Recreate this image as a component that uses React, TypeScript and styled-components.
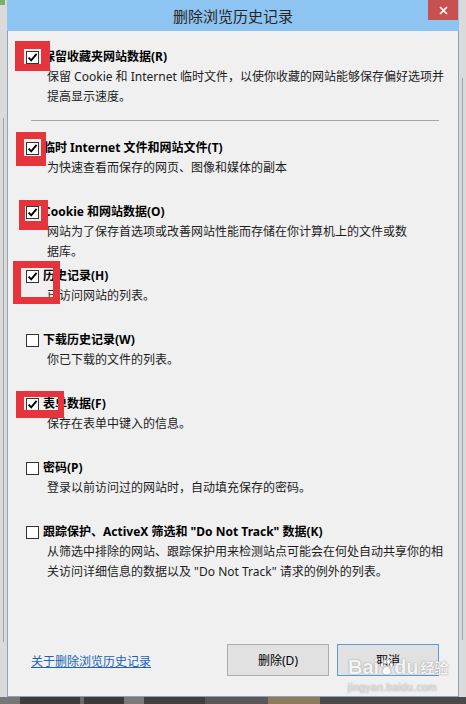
import React from "react";
import styled, { createGlobalStyle } from "styled-components";

const GlobalStyle = createGlobalStyle`
  *, *::before, *::after { box-sizing: border-box; }
  html, body { margin: 0; padding: 0; }
  body {
    width: 466px;
    height: 704px;
    overflow: hidden;
    font-family: "Noto Sans", "Noto Sans CJK SC", sans-serif;
  }
`;

const Backdrop = styled.div`
  position: relative;
  width: 466px;
  height: 704px;
  display: grid;
  grid-template-columns: 7px 452px 7px;
  grid-template-rows: 697px 7px;
  background:
    linear-gradient(#a3a3a3, #a3a3a3) 3px 118px / 1px 524px no-repeat,
    linear-gradient(#a3a3a3, #a3a3a3) 462px 78px / 1px 562px no-repeat,
    linear-gradient(#7fae6a, #7fae6a) 0 0 / 5px 5px no-repeat,
    linear-gradient(
        to right,
        #777 0 20px,
        #3c3c3c 20px 80px,
        #6a6a6a 80px 84px,
        #3a3a3a 84px 124px,
        #7a7a7a 124px 144px,
        #404040 144px 205px,
        #585858 205px 268px,
        #8c7c5c 268px 320px,
        #4a4a4a 320px 466px
      )
      0 697px / 466px 7px no-repeat,
    #dadada;
`;

const Dialog = styled.section`
  grid-column: 2;
  grid-row: 1;
  display: flex;
  flex-direction: column;
  background: #f0f0f0;
  border: 1px solid #8ea3b8;
  border-top: none;
`;

const TitleBar = styled.header`
  height: 31px;
  margin: 0 -1px;
  background: #8ec4f1;
  display: grid;
  grid-template-columns: 1fr auto 1fr;
`;

const Title = styled.h1`
  grid-column: 2;
  margin: 0;
  font-family: "Noto Sans CJK SC", sans-serif;
  font-weight: 400;
  font-size: 15px;
  line-height: 31px;
  color: #262626;
`;

const CloseButton = styled.div`
  grid-column: 3;
  justify-self: end;
  align-self: start;
  width: 30px;
  height: 20px;
  margin-right: 1px;
  background: #c75050;
  display: flex;
  align-items: center;
  justify-content: center;
`;

const Body = styled.div`
  flex: 1;
  display: flex;
  flex-direction: column;
  padding: 16px 19px 20px 18px;
`;

const Option = styled.div`
  display: grid;
  grid-template-columns: 13px 1fr;
  column-gap: 4px;
  align-content: start;
`;

const OptionList = styled.div`
  display: grid;
  grid-auto-rows: 64px;
`;

const Box = styled.span`
  width: 13px;
  height: 13px;
  align-self: center;
  background: #fff;
  border: 1px solid #333;
  display: flex;
  align-items: center;
  justify-content: center;
`;

const Heading = styled.div`
  font-size: 12px;
  font-weight: 700;
  line-height: 20px;
  color: #000;
  white-space: nowrap;
`;

const Desc = styled.div`
  grid-column: 2;
  padding-left: 4px;
  font-size: 12px;
  line-height: 20px;
  color: #1c1c1c;
  white-space: nowrap;
`;

const Line = styled.span`
  display: block;
`;

const Separator = styled.hr`
  margin: 13px 0 17px 5px;
  border: none;
  height: 1px;
  background: #a4a4a4;
`;

const Footer = styled.footer`
  margin-top: auto;
  display: flex;
  align-items: center;
  gap: 8px;
  padding-left: 5px;
`;

const HelpLink = styled.a`
  margin-right: auto;
  font-family: "Noto Sans CJK SC", sans-serif;
  font-size: 12px;
  color: #1a63b8;
  text-decoration: underline;
  cursor: pointer;
`;

const Button = styled.button<{ $primary?: boolean }>`
  width: 102px;
  height: 32px;
  padding: 0;
  background: #e1e1e1;
  border: 1px solid ${(p) => (p.$primary ? "#5b9bd5" : "#adadad")};
  font-family: "Noto Sans", "Noto Sans CJK SC", sans-serif;
  font-size: 12px;
  color: #000;
`;

const Highlight = styled.div<{
  $x: number;
  $y: number;
  $w: number;
  $h: number;
  $t: number;
  $r: number;
  $b: number;
  $l: number;
}>`
  position: absolute;
  left: ${(p) => p.$x}px;
  top: ${(p) => p.$y}px;
  width: ${(p) => p.$w}px;
  height: ${(p) => p.$h}px;
  border-style: solid;
  border-color: #e6343c;
  border-width: ${(p) => `${p.$t}px ${p.$r}px ${p.$b}px ${p.$l}px`};
  pointer-events: none;
`;

const Watermark = styled.div`
  position: absolute;
  left: 348px;
  top: 656px;
  display: flex;
  flex-direction: column;
  align-items: flex-start;
  pointer-events: none;
  color: rgba(255, 255, 255, 0.92);
  text-shadow: 0 0 1px rgba(90, 90, 90, 0.55), 0 0 2px rgba(120, 120, 120, 0.35);
`;

const MarkRow = styled.div`
  display: flex;
  align-items: center;
  font-family: "Liberation Sans", sans-serif;
  font-weight: 700;
  font-size: 20px;
  line-height: 22px;
`;

const MarkCjk = styled.span`
  font-family: "Noto Sans CJK SC", sans-serif;
  font-size: 14px;
  font-weight: 700;
  margin-left: 2px;
`;

const MarkSite = styled.div`
  font-family: "Liberation Sans", sans-serif;
  font-size: 10px;
  line-height: 12px;
  margin-top: 4px;
  letter-spacing: 0.5px;
  color: rgba(255, 255, 255, 0.7);
`;

const Check = () => (
  <svg width="11" height="11" viewBox="0 0 11 11">
    <path d="M1.6 5.6 L4.2 8.3 L9.6 1.9" fill="none" stroke="#000" strokeWidth="1.9" />
  </svg>
);

type Item = { title: string; lines: string[]; checked: boolean };

const items: Item[] = [
  { title: "临时 Internet 文件和网站文件(T)", lines: ["为快速查看而保存的网页、图像和媒体的副本"], checked: true },
  {
    title: "Cookie 和网站数据(O)",
    lines: ["网站为了保存首选项或改善网站性能而存储在你计算机上的文件或数", "据库。"],
    checked: true,
  },
  { title: "历史记录(H)", lines: ["已访问网站的列表。"], checked: true },
  { title: "下载历史记录(W)", lines: ["你已下载的文件的列表。"], checked: false },
  { title: "表单数据(F)", lines: ["保存在表单中键入的信息。"], checked: true },
  { title: "密码(P)", lines: ["登录以前访问过的网站时，自动填充保存的密码。"], checked: false },
  {
    title: "跟踪保护、ActiveX 筛选和 \"Do Not Track\" 数据(K)",
    lines: [
      "从筛选中排除的网站、跟踪保护用来检测站点可能会在何处自动共享你的相",
      "关访问详细信息的数据以及 \"Do Not Track\" 请求的例外的列表。",
    ],
    checked: false,
  },
];

const OptionView = ({ item }: { item: Item }) => (
  <Option>
    <Box>{item.checked && <Check />}</Box>
    <Heading>{item.title}</Heading>
    <Desc>
      {item.lines.map((l) => (
        <Line key={l}>{l}</Line>
      ))}
    </Desc>
  </Option>
);

const Paw = () => (
  <svg width="15" height="17" viewBox="0 0 15 17">
    <g fill="rgba(255,255,255,0.92)" stroke="rgba(110,110,110,0.5)" strokeWidth="0.7">
      <ellipse cx="3" cy="6" rx="1.7" ry="2.2" />
      <ellipse cx="6" cy="2.8" rx="1.7" ry="2.2" />
      <ellipse cx="9.6" cy="2.8" rx="1.7" ry="2.2" />
      <ellipse cx="12.4" cy="6" rx="1.7" ry="2.2" />
      <path d="M7.6 7.5 C4.5 7.5 2.5 12 3.6 14.2 C4.8 16.4 10.4 16.4 11.6 14.2 C12.7 12 10.7 7.5 7.6 7.5 Z" />
    </g>
  </svg>
);

const highlights = [
  { x: 15, y: 41, w: 35, h: 30, t: 8, r: 9, b: 7, l: 9 },
  { x: 16, y: 132, w: 30, h: 34, t: 7, r: 5, b: 10, l: 8 },
  { x: 19, y: 200, w: 29, h: 30, t: 6, r: 7, b: 9, l: 6 },
  { x: 13, y: 261, w: 47, h: 43, t: 7, r: 7, b: 7, l: 8 },
  { x: 16, y: 391, w: 48, h: 27, t: 6, r: 6, b: 8, l: 8 },
];

export default function App() {
  return (
    <>
      <GlobalStyle />
      <Backdrop>
        <Dialog>
          <TitleBar>
            <Title>删除浏览历史记录</Title>
            <CloseButton>
              <svg width="9" height="9" viewBox="0 0 9 9">
                <path d="M1 1 L8 8 M8 1 L1 8" stroke="#fff" strokeWidth="1.7" />
              </svg>
            </CloseButton>
          </TitleBar>
          <Body>
            <OptionView
              item={{
                title: "保留收藏夹网站数据(R)",
                lines: ["保留 Cookie 和 Internet 临时文件，以使你收藏的网站能够保存偏好选项并", "提高显示速度。"],
                checked: true,
              }}
            />
            <Separator />
            <OptionList>
              {items.map((it) => (
                <OptionView key={it.title} item={it} />
              ))}
            </OptionList>
            <Footer>
              <HelpLink>关于删除浏览历史记录</HelpLink>
              <Button>删除(D)</Button>
              <Button $primary>取消</Button>
            </Footer>
          </Body>
        </Dialog>
        {highlights.map((h, i) => (
          <Highlight key={i} $x={h.x} $y={h.y} $w={h.w} $h={h.h} $t={h.t} $r={h.r} $b={h.b} $l={h.l} />
        ))}
        <Watermark>
          <MarkRow>
            Bai
            <Paw />
            du
            <MarkCjk>经验</MarkCjk>
          </MarkRow>
          <MarkSite>jingyan.baidu.com</MarkSite>
        </Watermark>
      </Backdrop>
    </>
  );
}
